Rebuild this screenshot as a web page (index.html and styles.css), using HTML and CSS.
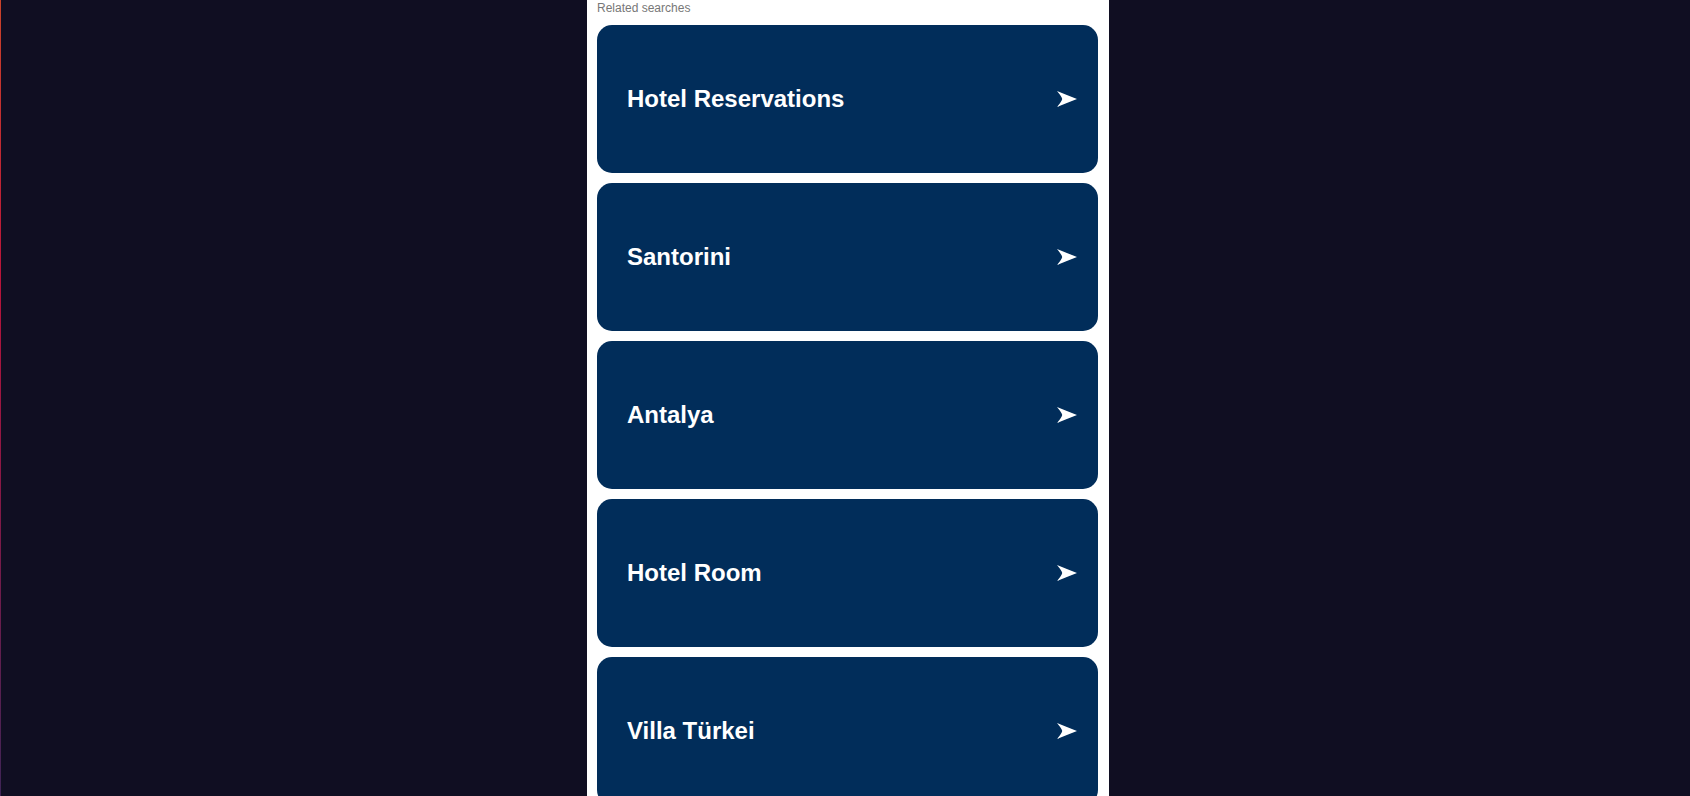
FILE: index.html
```html
<!DOCTYPE html>
<html lang="en">
<head>
<meta charset="utf-8">
<title>Related searches</title>
<link rel="stylesheet" href="styles.css">
</head>
<body>
<div class="panel">
  <div class="label">Related searches</div>
  <div class="list">
    <a class="card" href="#"><span class="title">Hotel Reservations</span><svg class="arrow" viewBox="0 0 20 16"><path d="M0 0 Q11 4.5 20 8 Q11 11.5 0 16 Q5 10 5.2 8 Q5 6 0 0Z"/></svg></a>
    <a class="card" href="#"><span class="title">Santorini</span><svg class="arrow" viewBox="0 0 20 16"><path d="M0 0 Q11 4.5 20 8 Q11 11.5 0 16 Q5 10 5.2 8 Q5 6 0 0Z"/></svg></a>
    <a class="card" href="#"><span class="title">Antalya</span><svg class="arrow" viewBox="0 0 20 16"><path d="M0 0 Q11 4.5 20 8 Q11 11.5 0 16 Q5 10 5.2 8 Q5 6 0 0Z"/></svg></a>
    <a class="card" href="#"><span class="title">Hotel Room</span><svg class="arrow" viewBox="0 0 20 16"><path d="M0 0 Q11 4.5 20 8 Q11 11.5 0 16 Q5 10 5.2 8 Q5 6 0 0Z"/></svg></a>
    <a class="card" href="#"><span class="title">Villa Türkei</span><svg class="arrow" viewBox="0 0 20 16"><path d="M0 0 Q11 4.5 20 8 Q11 11.5 0 16 Q5 10 5.2 8 Q5 6 0 0Z"/></svg></a>
  </div>
</div>
</body>
</html>
```

FILE: styles.css
```css
html, body {
  margin: 0;
  padding: 0;
  height: 100%;
}
body {
  overflow: hidden;
  font-family: "Liberation Sans", Arial, Helvetica, sans-serif;
  background:
    linear-gradient(to bottom, #c9432a 0%, #b8143a 35%, #8a1845 60%, #3e2456 100%) left top / 1px 100% no-repeat,
    #100e22;
}
.panel {
  width: 522px;
  min-height: 100%;
  box-sizing: border-box;
  margin-left: calc(50% - 258px);
  background: #ffffff;
  padding: 0 11px 0 10px;
}
.label {
  font-size: 12px;
  line-height: 16px;
  color: #777777;
  margin-bottom: 9px;
}
.list {
  display: flex;
  flex-direction: column;
  gap: 10px;
}
.card {
  display: flex;
  align-items: center;
  justify-content: space-between;
  height: 148px;
  box-sizing: border-box;
  padding: 0 21px 0 30px;
  border-radius: 15px;
  background: #012d5a;
  text-decoration: none;
}
.title {
  color: #ffffff;
  font-size: 24px;
  font-weight: bold;
  line-height: 28px;
}
.arrow {
  width: 20px;
  height: 16px;
  fill: #ffffff;
  flex: none;
}
```
